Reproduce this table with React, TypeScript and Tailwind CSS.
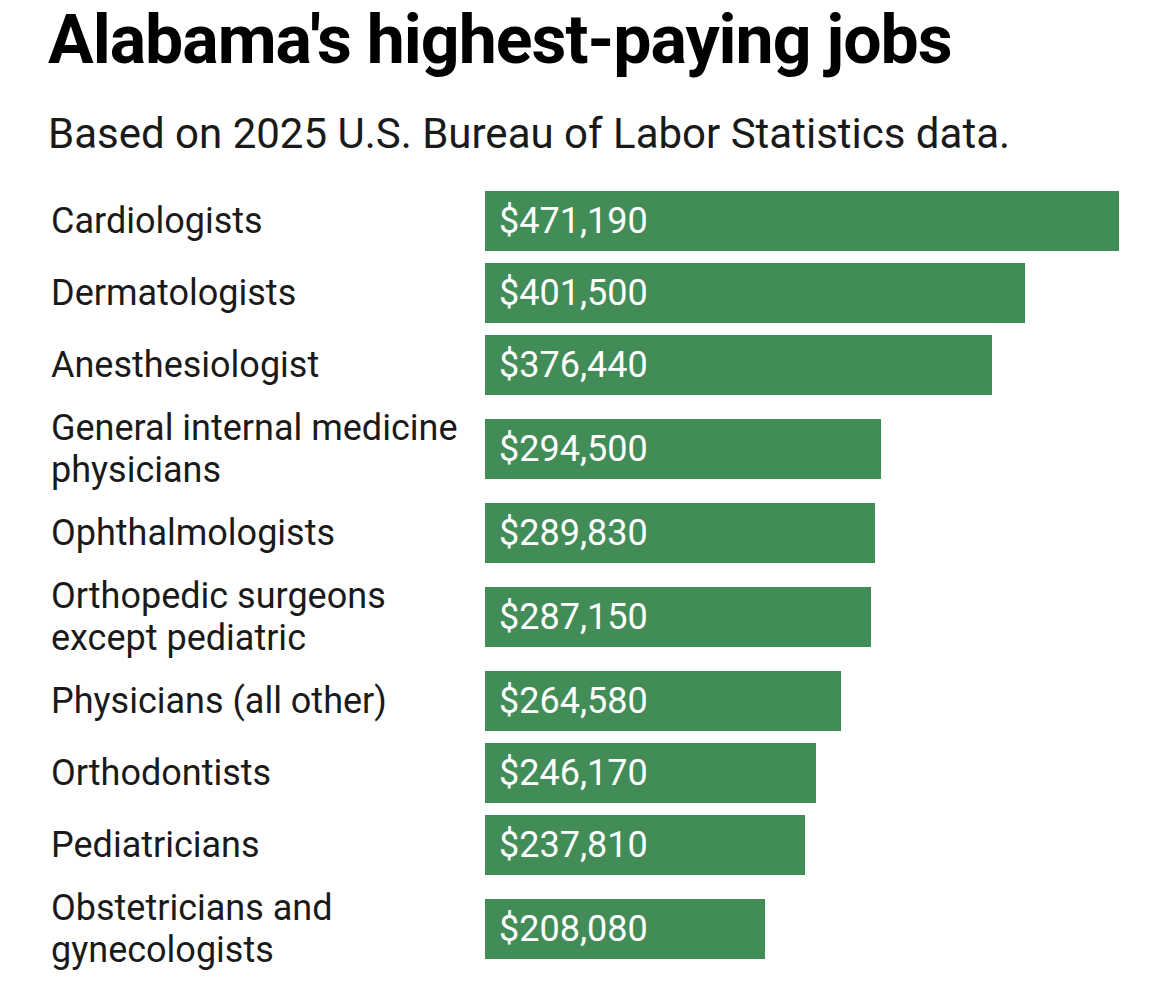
import React from 'react';

interface Job {
    label: string[];
    pay: number;
}

const jobs: Job[] = [
    { label: ['Cardiologists'], pay: 471190 },
    { label: ['Dermatologists'], pay: 401500 },
    { label: ['Anesthesiologist'], pay: 376440 },
    { label: ['General internal medicine', 'physicians'], pay: 294500 },
    { label: ['Ophthalmologists'], pay: 289830 },
    { label: ['Orthopedic surgeons', 'except pediatric'], pay: 287150 },
    { label: ['Physicians (all other)'], pay: 264580 },
    { label: ['Orthodontists'], pay: 246170 },
    { label: ['Pediatricians'], pay: 237810 },
    { label: ['Obstetricians and', 'gynecologists'], pay: 208080 },
];

const maxPay = Math.max(...jobs.map(j => j.pay));

export default function App() {
    return (
        <div className="w-[1170px] h-[1003px] bg-white overflow-hidden pl-[48px] pr-[51px] font-['Roboto',sans-serif]">
            <h1 className="text-[68px] leading-[80px] font-bold text-black tracking-[-1px]">
                Alabama's highest-paying jobs
            </h1>
            <p className="mt-[29px] text-[42px] leading-[50px] text-[#1a1a1a]">
                Based on 2025 U.S. Bureau of Labor Statistics data.
            </p>

            {/* bars */}
            <div className="mt-[32px] flex flex-col gap-[12px]">
                {jobs.map(job => (
                    <div key={job.pay} className="flex items-center">
                        <div className="w-[437px] shrink-0 pl-[3px] text-[36px] leading-[42px] text-[#1a1a1a] whitespace-nowrap">
                            {job.label.map(line => (
                                <div key={line}>{line}</div>
                            ))}
                        </div>
                        <div className="flex-1">
                            <div
                                className="h-[60px] bg-[#428c58] flex items-center pl-[14px] text-[36px] text-white whitespace-nowrap"
                                style={{ width: `${(job.pay / maxPay) * 100}%` }}
                            >
                                ${job.pay.toLocaleString('en-US')}
                            </div>
                        </div>
                    </div>
                ))}
            </div>
        </div>
    );
}
